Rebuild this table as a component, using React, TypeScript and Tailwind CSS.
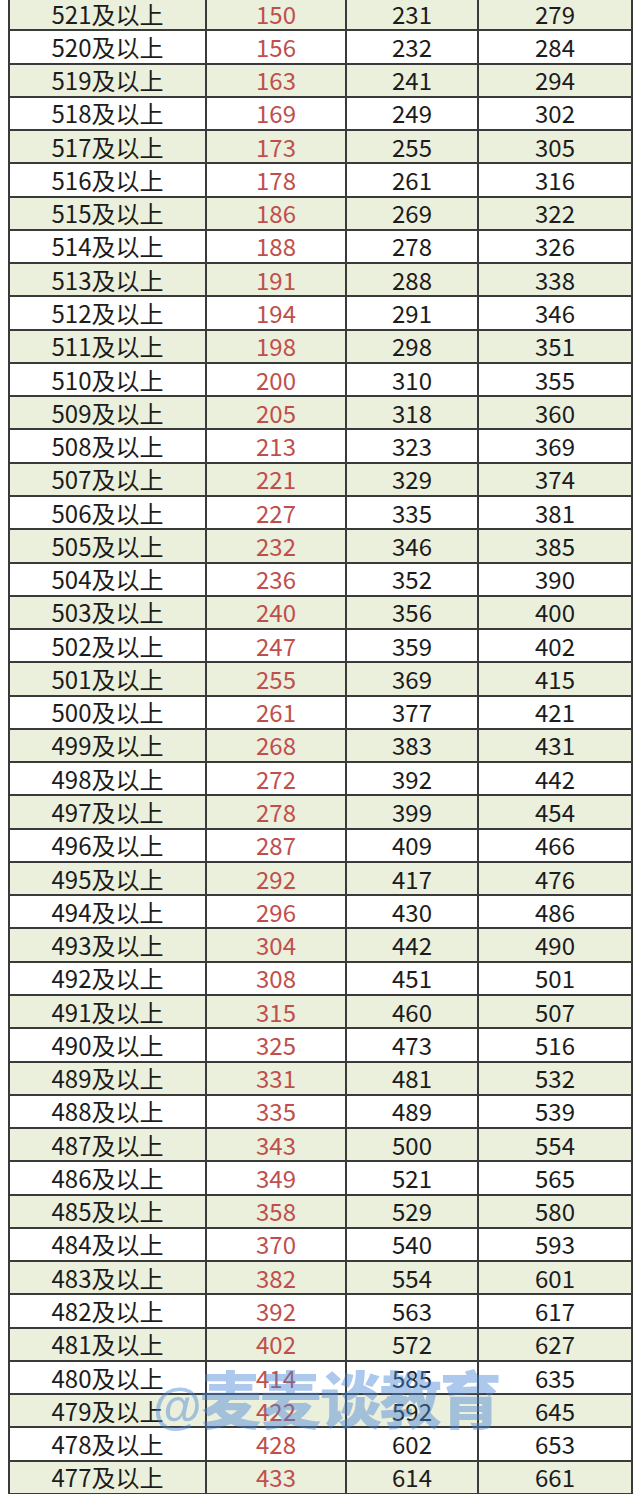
const rows: [number, number, number, number][] = [
  [521, 150, 231, 279],
  [520, 156, 232, 284],
  [519, 163, 241, 294],
  [518, 169, 249, 302],
  [517, 173, 255, 305],
  [516, 178, 261, 316],
  [515, 186, 269, 322],
  [514, 188, 278, 326],
  [513, 191, 288, 338],
  [512, 194, 291, 346],
  [511, 198, 298, 351],
  [510, 200, 310, 355],
  [509, 205, 318, 360],
  [508, 213, 323, 369],
  [507, 221, 329, 374],
  [506, 227, 335, 381],
  [505, 232, 346, 385],
  [504, 236, 352, 390],
  [503, 240, 356, 400],
  [502, 247, 359, 402],
  [501, 255, 369, 415],
  [500, 261, 377, 421],
  [499, 268, 383, 431],
  [498, 272, 392, 442],
  [497, 278, 399, 454],
  [496, 287, 409, 466],
  [495, 292, 417, 476],
  [494, 296, 430, 486],
  [493, 304, 442, 490],
  [492, 308, 451, 501],
  [491, 315, 460, 507],
  [490, 325, 473, 516],
  [489, 331, 481, 532],
  [488, 335, 489, 539],
  [487, 343, 500, 554],
  [486, 349, 521, 565],
  [485, 358, 529, 580],
  [484, 370, 540, 593],
  [483, 382, 554, 601],
  [482, 392, 563, 617],
  [481, 402, 572, 627],
  [480, 414, 585, 635],
  [479, 422, 592, 645],
  [478, 428, 602, 653],
  [477, 433, 614, 661],
];

export default function App() {
  return (
    <div
      className="relative w-[640px] h-[1494px] overflow-hidden bg-white text-[24px] text-[#1c1c1c]"
      style={{ fontFamily: '"Noto Sans CJK SC", "Noto Sans", sans-serif' }}
    >
      <div className="ml-[8px] -mt-[2px] w-[625px]">
        {rows.map(([score, a, b, c], i) => (
          <div
            key={score}
            className={`grid grid-cols-[197px_140px_132px_156px] h-[33.27px] border-b-2 border-[#3a3a3a] ${
              i % 2 === 0 ? "bg-[#ebf0dc]" : "bg-white"
            }`}
          >
            <div className="flex items-center justify-center border-l-2 border-[#3a3a3a] leading-none">
              {score}及以上
            </div>
            <div className="flex items-center justify-center border-l-2 border-[#3a3a3a] leading-none text-[#bf4f4c]">
              {a}
            </div>
            <div className="flex items-center justify-center border-l-2 border-[#3a3a3a] leading-none">
              {b}
            </div>
            <div className="flex items-center justify-center border-x-2 border-[#3a3a3a] leading-none">
              {c}
            </div>
          </div>
        ))}
      </div>

      {/* watermark */}
      <div className="pointer-events-none absolute left-[153px] top-[1366px] text-[62px] font-black leading-none text-[#4a86d8]/45 whitespace-nowrap tracking-[-2px]">
        <span className="text-[50px] font-bold" style={{ fontFamily: '"Liberation Sans", sans-serif' }}>@</span>
        麦麦谈教育
      </div>
    </div>
  );
}
